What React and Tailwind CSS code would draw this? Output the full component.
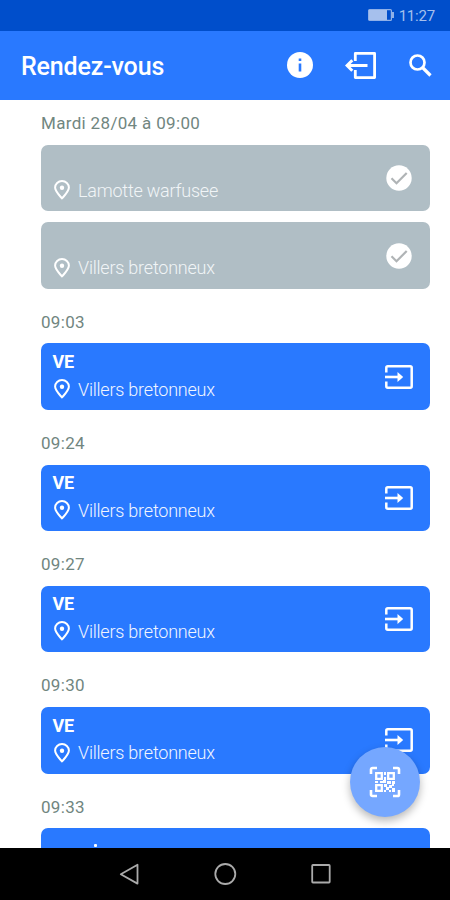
import React from 'react';

const stops = [
  { time: '09:03', place: 'Villers bretonneux' },
  { time: '09:24', place: 'Villers bretonneux' },
  { time: '09:27', place: 'Villers bretonneux' },
  { time: '09:30', place: 'Villers bretonneux' },
];

function PinIcon() {
  return (
    <svg className="h-5 w-4 shrink-0" viewBox="0 0 16 20" fill="none">
      <path d="M8 18.4C4.6 14.6 1.1 11.3 1.1 7.6a6.9 6.6 0 0 1 13.8 0c0 3.7-3.5 7-6.9 10.8Z" stroke="#fff" strokeWidth="2" strokeLinejoin="round" />
      <circle cx="8" cy="7.8" r="2.2" fill="#fff" />
    </svg>
  );
}

function CheckIcon() {
  return (
    <svg className="h-[26px] w-[26px]" viewBox="0 0 26 26" fill="none">
      <circle cx="13" cy="13" r="12.7" fill="#fff" />
      <path d="M5.5 13.3l5 5L20.7 8" stroke="#b0b4b6" strokeWidth="2.2" />
    </svg>
  );
}

function EnterIcon() {
  return (
    <svg className="h-6 w-7" viewBox="0 0 28 24" fill="none">
      <path d="M1.3 7.4V2.8Q1.3 1.3 2.8 1.3H25.2Q26.7 1.3 26.7 2.8V21.2Q26.7 22.7 25.2 22.7H2.8Q1.3 22.7 1.3 21.2V16.6" stroke="#fff" strokeWidth="2.5" />
      <path d="M0 12h14" stroke="#fff" strokeWidth="2.6" />
      <path d="M12.5 7l5.7 5-5.7 5Z" fill="#fff" />
    </svg>
  );
}

function QrIcon() {
  return (
    <svg className="h-8 w-8" viewBox="0 0 32 32" fill="none">
      <path d="M2 8V3.6Q2 2 3.6 2H8M24 2h4.4Q30 2 30 3.6V8M30 24v4.4Q30 30 28.4 30H24M8 30H3.6Q2 30 2 28.4V24" stroke="#fff" strokeWidth="2.6" />
      <path d="M7.2 7.2h5.6v5.6H7.2ZM19.2 7.2h5.6v5.6h-5.6ZM7.2 19.2h5.6v5.6H7.2Z" stroke="#fff" strokeWidth="2.3" />
      <path d="M15 6h2v3h-2ZM15 11h2v3h-2ZM6 15h3v2H6ZM11 15h3v2h-3ZM14 14h3v3h-3ZM18 15h4v3h-4ZM23 15h3v3h-3ZM15 18h3v3h-3ZM20 19h3v3h-3ZM17 21h3v3h-3ZM23 22h3v4h-3ZM15 24h2v2h-2ZM20 24h2v2h-2ZM23 18h2v2h-2Z" fill="#fff" />
    </svg>
  );
}

function Card({ title, place, done }) {
  return (
    <article className={`flex h-[66.6px] items-center justify-between rounded-[7px] pr-[17px] pl-[11px] ${done ? 'bg-[#b0bec5]' : 'bg-[#2979ff]'}`}>
      <div className="pb-[1.4px]">
        <h2 className="h-[26px] pl-[0.5px] text-[18px] leading-6 font-bold tracking-[-0.2px] text-white">{title}</h2>
        <div className="flex h-[26px] items-center gap-2 pl-0.5">
          <PinIcon />
          <span className={`text-[18px] font-light tracking-[-0.22px] ${done ? 'text-[#f1f5f7]' : 'text-[#f0f5ff]'}`}>{place}</span>
        </div>
      </div>
      {done ? <div className="mr-[1px]"><CheckIcon /></div> : <EnterIcon />}
    </article>
  );
}

export default function App() {
  return (
    <div className="relative flex h-[900px] w-[450px] flex-col overflow-hidden bg-white font-[Roboto,sans-serif]">
      <div className="flex h-[30.5px] shrink-0 items-center justify-end gap-[5px] bg-[#004ecb] pr-[15px]">
        <svg className="h-3 w-[26px]" viewBox="0 0 26 12" fill="none">
          <rect x=".6" y=".6" width="22.8" height="10.8" rx="1" stroke="#8fb0e8" strokeWidth="1.2" />
          <path d="M1 1h18v10H1Z" fill="#a6c0ed" />
          <path d="M24 3h2v6h-2Z" fill="#8fb0e8" />
        </svg>
        <span className="pt-[2px] text-[15px] tracking-[-0.2px] text-[#a6c0ed]">11:27</span>
      </div>

      <header className="flex h-[69.8px] shrink-0 items-center bg-[#2979ff] pr-[18px] pl-[21px]">
        <h1 className="grow pt-[2px] text-[25px] font-medium tracking-[-0.15px] text-white">Rendez-vous</h1>
        <svg className="mr-8 h-[26px] w-[26px]" viewBox="0 0 26 26">
          <circle cx="13" cy="13" r="13" fill="#fff" />
          <path d="M11.7 6.4h2.6V9h-2.6ZM11.7 11.4h2.6v8h-2.6Z" fill="#2979ff" />
        </svg>
        <svg className="mr-[33px] h-[27px] w-[31px]" viewBox="0 0 31 27" fill="none">
          <path d="M10.3 9V1.4h19.3v24.2H10.3V18" stroke="#fff" strokeWidth="2.8" strokeLinejoin="round" />
          <path d="M2 13.5h20.5M7.3 8.2 2 13.5l5.3 5.3" stroke="#fff" strokeWidth="3" />
        </svg>
        <svg className="h-[23px] w-[23px]" viewBox="0 0 23 23" fill="none">
          <circle cx="8.5" cy="8.5" r="7" stroke="#fff" strokeWidth="2.7" />
          <path d="M13.5 13.5l8 8" stroke="#fff" strokeWidth="3.2" />
        </svg>
      </header>

      <main className="min-h-0 grow overflow-hidden pr-5 pl-[41px] text-[17px] text-[#71867f]">
        <p className="h-[44.5px] pt-[11px] leading-6 tracking-[0.33px]">Mardi 28/04 à 09:00</p>
        <div className="flex flex-col gap-[10.9px]">
          <Card done place="Lamotte warfusee" />
          <Card done place="Villers bretonneux" />
        </div>
        {stops.map((stop) => (
          <section key={stop.time}>
            <p className="h-[54.6px] pt-[21px] leading-6 tracking-[0.3px]">{stop.time}</p>
            <Card title="VE" place={stop.place} />
          </section>
        ))}
        <section>
          <p className="h-[54.6px] pt-[21px] leading-6 tracking-[0.3px]">09:33</p>
          <div className="h-[67px] rounded-[7px] bg-[#2979ff] pt-4 pl-[53px]">
            <div className="h-[3px] w-[3px] rounded-[1px] bg-white" />
          </div>
        </section>
      </main>

      <nav className="flex h-[52px] shrink-0 items-center justify-center gap-[71.5px] bg-black">
        <svg className="h-6 w-6" viewBox="0 0 24 24" fill="none" stroke="#aaa" strokeWidth="1.8">
          <path d="M19.5 2.8v18.8L2.8 12.2Z" strokeLinejoin="round" />
        </svg>
        <svg className="h-6 w-6" viewBox="0 0 24 24" fill="none" stroke="#aaa" strokeWidth="1.8">
          <circle cx="12.3" cy="12" r="10" />
        </svg>
        <svg className="h-6 w-6" viewBox="0 0 24 24" fill="none" stroke="#aaa" strokeWidth="1.8">
          <rect x="3.2" y="3" width="17.5" height="17.5" rx=".7" />
        </svg>
      </nav>

      <button aria-label="QR" className="absolute top-[747px] left-[350px] flex h-[70px] w-[70px] items-center justify-center rounded-full bg-[#75a7ff] shadow-[0_4px_8px_rgba(0,0,0,0.28)]">
        <QrIcon />
      </button>
    </div>
  );
}
